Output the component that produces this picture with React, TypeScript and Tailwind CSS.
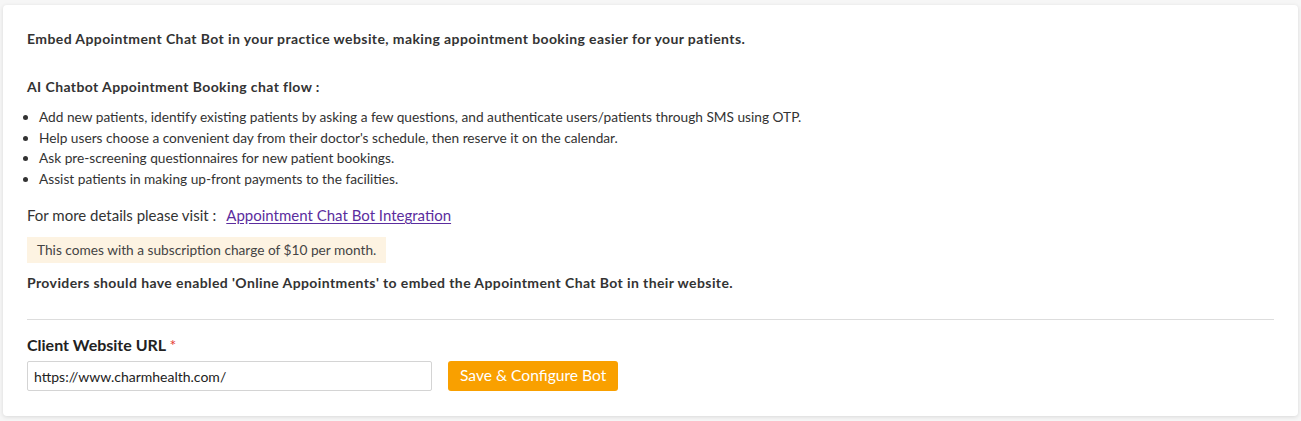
import React from "react";

const bullets = [
  "Add new patients, identify existing patients by asking a few questions, and authenticate users/patients through SMS using OTP.",
  "Help users choose a convenient day from their doctor's schedule, then reserve it on the calendar.",
  "Ask pre-screening questionnaires for new patient bookings.",
  "Assist patients in making up-front payments to the facilities.",
];

export default function App() {
  return (
    <div
      className="min-h-[421px] bg-[#f6f6f6] pt-[5px] px-[3px] pb-[5px]"
      style={{ fontFamily: "Lato, 'Open Sans', sans-serif" }}
    >
      <div className="bg-white rounded-[4px] shadow-[0_1px_4px_rgba(0,0,0,0.12)] px-6 pt-6 pb-[25px] text-[13.7px] text-[#333]">
        <p className="font-bold text-[14px] tracking-[0.4px] leading-5">
          Embed Appointment Chat Bot in your practice website, making appointment booking easier for your patients.
        </p>

        <p className="font-bold text-[14px] tracking-[0.4px] leading-5 mt-7">
          AI Chatbot Appointment Booking chat flow :
        </p>

        <ul className="mt-[10px] pl-3 list-disc list-outside leading-[20.5px]">
          {bullets.map((b) => (
            <li key={b} className="marker:text-[#333]">
              {b}
            </li>
          ))}
        </ul>

        <p className="leading-5 mt-4 flex items-baseline text-[15px]">
          <span>For more details please visit :</span>
          <a href="#" className="ml-[10px] text-[#5b2d9e] underline underline-offset-2">
            Appointment Chat Bot Integration
          </a>
        </p>

        <div className="mt-3 inline-block bg-[#fdf3e2] px-[10px] h-[26px] leading-[26px] text-[#444]">
          This comes with a subscription charge of $10 per month.
        </div>

        <p className="font-bold text-[14px] tracking-[0.4px] leading-5 mt-[10px]">
          Providers should have enabled 'Online Appointments' to embed the Appointment Chat Bot in their website.
        </p>

        <div className="mt-[26px] border-t border-[#dddddd]" />

        <label className="block mt-[15px] text-[16px] font-bold leading-5 text-[#222]">
          Client Website URL <span className="text-[#e53935] font-normal">*</span>
        </label>

        <div className="mt-[6px] flex items-start gap-4">
          <input
            type="text"
            defaultValue="https://www.charmhealth.com/"
            className="w-[405px] h-[30px] border border-[#d4d4d4] rounded-[2px] px-[6px] text-[14px] text-[#222] outline-none"
          />
          <button className="h-[30px] px-3 rounded-[3px] bg-[#f9a000] text-white text-[15.6px] leading-none">
            Save &amp; Configure Bot
          </button>
        </div>
      </div>
    </div>
  );
}
